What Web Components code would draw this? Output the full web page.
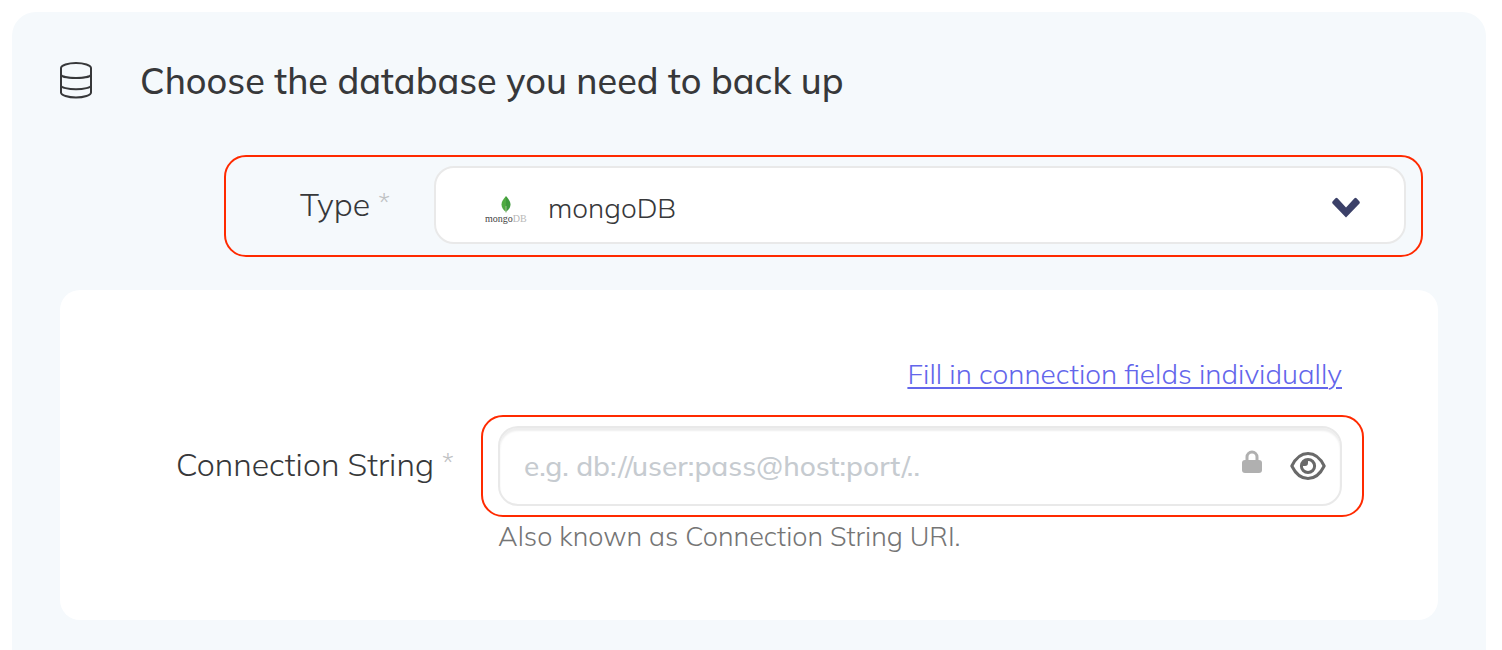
<!DOCTYPE html>
<html lang="en">
<head>
<meta charset="utf-8">
<meta name="viewport" content="width=device-width, initial-scale=1">
<title>Database backup</title>
<style>
  body { margin: 0; background: #fff; color: #37383a; font-family: Mulish, Muli, Nunito, Lato, "Open Sans", sans-serif; font-weight: 300; }
</style>
</head>
<body>
<backup-panel>
  <database-icon slot="icon"></database-icon>
  <span slot="title">Choose the database you need to back up</span>
  <type-field></type-field>
  <settings-card>
    <a slot="link" href="#fields">Fill in connection fields individually</a>
    <connection-field></connection-field>
  </settings-card>
</backup-panel>
<script>
const define = (name, html) => customElements.define(name, class extends HTMLElement {
  constructor() {
    super();
    const template = document.createElement('template');
    template.innerHTML = html;
    this.attachShadow({ mode: 'open' }).append(template.content.cloneNode(true));
  }
});

define('backup-panel', `
<style>
  :host { display: block; box-sizing: border-box; min-height: calc(100vh - 12px); margin: 12px 16px 0 12px; padding: 44px 48px 30px; background: #f5f9fc; border-radius: 24px 24px 0 0; }
  header { display: flex; align-items: center; gap: 48px; height: 50px; margin-bottom: 49px; }
  h1 { margin: 0; font-size: 36px; line-height: 50px; font-weight: 500; }
</style>
<header><slot name="icon"></slot><h1><slot name="title"></slot></h1></header>
<slot></slot>`);

define('database-icon', `
<style>:host { display: block; width: 32px; height: 48px; } svg { display: block; }</style>
<svg width="32" height="48" viewBox="0 0 32 48" fill="none" stroke="#37383a" stroke-width="2" aria-hidden="true">
  <path d="M1 11C1 8.300 8 6 16 6S31 8.300 31 11V35.500C31 38.200 24 40.500 16 40.500S1 38.200 1 35.500Z"/>
  <path d="M1 17.500C1 19.500 8 21 16 21S31 19.500 31 17.500M1 28.500C1 30.500 8 32.300 16 32.300S31 30.500 31 28.500"/>
</svg>`);

define('mongo-logo', `
<style>:host { display: block; width: 42px; height: 30px; } svg { display: block; font-family: "Liberation Serif", serif; }</style>
<svg width="42" height="30" viewBox="0 0 42 30" aria-hidden="true">
  <path d="M21 0C18.500 3 16.500 5.500 16.500 8.500C16.500 11.500 18.500 14 21 16Z" fill="#4faa41"/>
  <path d="M21 0C23.500 3 25.500 5.500 25.500 8.500C25.500 11.500 23.500 14 21 16Z" fill="#3f9a3c"/>
  <path d="M21 10V17" stroke="#b5c9a4" stroke-width="0.800"/>
  <text x="0" y="26" font-size="10" font-weight="400" fill="#444">mongo<tspan fill="#b8b8b8">DB</tspan></text>
</svg>`);

define('type-field', `
<style>
  :host { display: grid; grid-template-columns: 208px 1fr; box-sizing: border-box; margin: 0 15px 33px 164px; padding: 9px 15px 11px 0; border: 2px solid #ff2a00; border-radius: 22px; }
  label { padding: 16px 0 0 74px; font-size: 32px; line-height: 44px; }
  .star { color: #bfc2c4; font-size: 26px; vertical-align: 4px; line-height: 1; }
  .box { position: relative; }
  select { appearance: none; display: block; box-sizing: border-box; width: 100%; height: 78px; padding: 4px 96px 0 112px; border: 2px solid #e9e9e9; border-radius: 20px; background: #fff; color: #37383a; font: inherit; font-size: 28px; }
  mongo-logo { position: absolute; left: 51px; top: 30px; pointer-events: none; }
  .chevron { position: absolute; right: 44px; top: 29px; pointer-events: none; }
</style>
<label for="type">Type <span class="star">*</span></label>
<div class="box">
  <select id="type"><option>mongoDB</option></select>
  <mongo-logo></mongo-logo>
  <svg class="chevron" width="32" height="24" viewBox="0 0 32 24" aria-hidden="true"><path d="M2.500 6.500L5.500 3.200Q6.500 2.500 7.500 3.200L16 12.500L24.500 3.200Q25.500 2.500 26.500 3.200L29.500 6.500Q30.200 7.500 29.500 8.500L16 22.500L2.500 8.500Q1.800 7.500 2.500 6.500Z" fill="#3b4068"/></svg>
</div>`);

define('settings-card', `
<style>
  :host { display: block; box-sizing: border-box; min-height: 330px; padding: 64px 74px 60px 0; background: #fff; border-radius: 20px; }
  .top { display: flex; justify-content: flex-end; padding-right: 22px; margin-bottom: 21px; }
  ::slotted(a) { color: #6366eb; font-size: 28px; line-height: 40px; text-decoration-thickness: 2px; text-underline-offset: 3px; }
</style>
<div class="top"><slot name="link"></slot></div>
<slot></slot>`);

define('connection-field', `
<style>
  :host { display: grid; grid-template-columns: 421px 1fr; }
  label { padding: 27px 0 0 116px; font-size: 32px; line-height: 44px; white-space: nowrap; }
  .star { color: #bfc2c4; font-size: 26px; vertical-align: 4px; line-height: 1; }
  .frame { padding: 9px 20px 9px 15px; border: 2px solid #ff2a00; border-radius: 22px; }
  .box { display: flex; align-items: center; box-sizing: border-box; height: 80px; padding-right: 14px; border: 2px solid #e9e9e9; border-radius: 20px; background: #fff; box-shadow: inset 0 3px 2px #eee; }
  input { flex: 1; min-width: 0; height: 58px; padding: 0 0 2px 24px; border: 0; outline: 0; background: transparent; color: #37383a; font: inherit; font-size: 28px; }
  input::placeholder { color: #c6cbd0; opacity: 1; font-weight: 500; }
  button { padding: 0; margin-left: 28px; border: 0; background: none; }
  svg { display: block; }
  p { margin: 0 0 0 17px; font-size: 27px; line-height: 38px; color: #757575; }
  .help { grid-column: 2; }
</style>
<label for="uri">Connection String <span class="star">*</span></label>
<div class="frame"><div class="box">
  <input id="uri" type="text" placeholder="e.g. db://user:pass@host:port/.." aria-describedby="hint">
  <svg width="20" height="32" viewBox="0 0 20 32" aria-hidden="true"><rect x="0" y="10" width="20" height="13" rx="3" fill="#b0b0b0"/><path d="M5 11V7A5 5 0 0 1 15 7V11" fill="none" stroke="#b0b0b0" stroke-width="3"/></svg>
  <button type="button" aria-label="Show connection string"><svg width="36" height="30" viewBox="0 0 36 30"><g fill="none" stroke="#696969" stroke-width="3"><path d="M1.800 15C5 8.500 10.500 2.500 18 2.500S31 8.500 34.200 15C31 21.500 25.500 27.500 18 27.500S5 21.500 1.800 15Z" stroke-linejoin="round"/><circle cx="18" cy="15" r="6.600"/></g><path d="M12 15A6 6 0 0 1 18 9V12Q18 15 15 15Z" fill="#696969"/></svg></button>
</div></div>
<div class="help"><p id="hint">Also known as Connection String URI.</p></div>`);
</script>
</body>
</html>
